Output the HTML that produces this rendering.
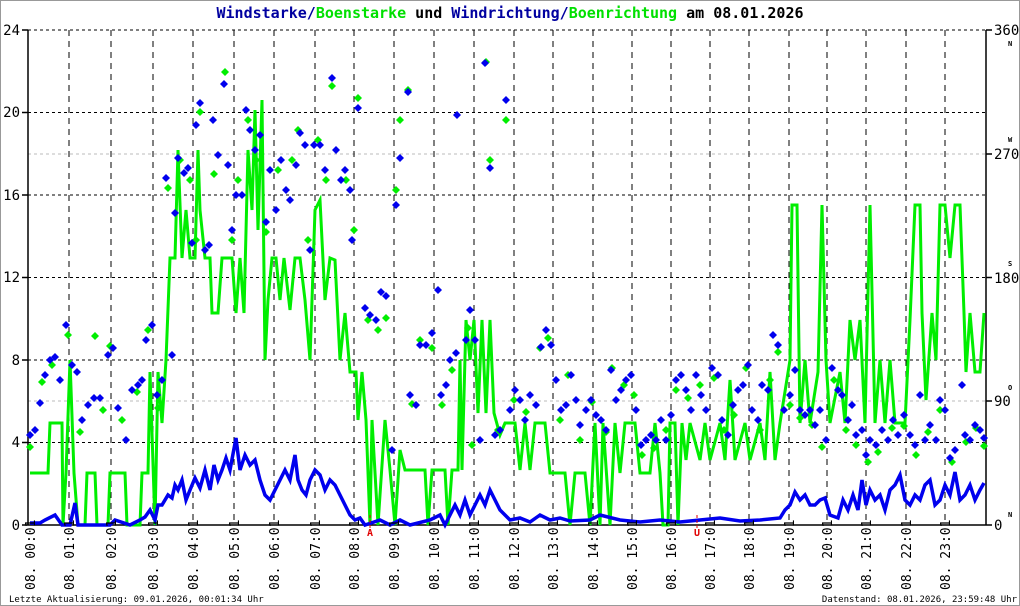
<!DOCTYPE html>
<html><head><meta charset="utf-8"><style>
html,body{margin:0;padding:0;background:#fff}
svg{display:block}
text{font-family:"DejaVu Sans Mono","Liberation Mono",monospace}
</style></head><body>
<svg width="1020" height="606" viewBox="0 0 1020 606" xmlns="http://www.w3.org/2000/svg">
<defs><path id="d" d="M0,-4 L4,0 L0,4 L-4,0Z"/></defs>
<rect x="0.5" y="0.5" width="1019" height="605" fill="#fff" stroke="#999"/>
<text x="510" y="18" text-anchor="middle" font-size="15" font-weight="bold" fill="#0000a0">Windstarke/<tspan fill="#00e000">Boenstarke</tspan><tspan fill="#000"> und </tspan>Windrichtung/<tspan fill="#00e000">Boenrichtung</tspan><tspan fill="#000"> am 08.01.2026</tspan></text>
<g stroke="#000" stroke-width="1" stroke-dasharray="3,3">
<path d="M28,30H986M28,112.5H986M28,195H986M28,277.5H986M28,360H986M28,442.5H986"/>
</g>
<g stroke="#bbb" stroke-width="1" stroke-dasharray="3,3"><path d="M28,154H986M28,401H986"/></g>
<g stroke="#000" stroke-width="1" stroke-dasharray="6,5">
<path d="M69,30V525M111,30V525M153,30V525M193,30V525M234,30V525M274,30V525M315,30V525M354,30V525M394,30V525M434,30V525M474,30V525M514,30V525M553,30V525M593,30V525M632,30V525M671,30V525M710,30V525M749,30V525M789,30V525M827,30V525M866,30V525M906,30V525M945,30V525"/>
</g>
<g stroke="#000" stroke-width="1.5" fill="none"><path d="M28,30V525H986V30M22,30H28M22,112.5H28M22,195H28M22,277.5H28M22,360H28M22,442.5H28M22,525H28M986,30H992M986,154H992M986,277.5H992M986,401H992M986,525H992"/></g>
<g font-size="14" fill="#000">
<text x="20" y="35" text-anchor="end">24</text><text x="20" y="117" text-anchor="end">20</text><text x="20" y="200" text-anchor="end">16</text><text x="20" y="282" text-anchor="end">12</text><text x="20" y="365" text-anchor="end">8</text><text x="20" y="447" text-anchor="end">4</text><text x="20" y="530" text-anchor="end">0</text>
<text x="994" y="35">360</text><text x="994" y="159">270</text><text x="994" y="283">180</text><text x="994" y="406">90</text><text x="994" y="530">0</text>
</g>
<g font-size="7" font-weight="bold" fill="#000"><text x="1008" y="46">N</text><text x="1008" y="142">W</text><text x="1008" y="266">S</text><text x="1008" y="390">O</text><text x="1008" y="517">N</text></g>
<polyline fill="none" stroke="#00ee00" stroke-width="3" points="30,473 48,473 50,423 62,423 63,525 66,473 70,360 74,473 78,525 85,525 87,473 95,473 97,525 108,525 110,473 125,473 127,525 140,525 142,473 148,473 150,372 155,525 158,372 162,423 166,360 170,258 175,258 178,150 182,258 186,210 190,258 195,258 198,150 200,210 205,258 210,258 212,313 218,313 222,258 228,258 232,258 236,313 240,258 244,313 248,150 252,210 255,110 258,230 262,100 265,360 268,300 272,258 276,258 280,300 284,258 290,310 295,258 300,258 305,300 310,360 315,210 320,200 325,300 330,258 335,260 340,360 345,313 350,372 356,372 358,420 362,372 366,420 370,525 372,420 378,525 385,420 390,470 395,525 400,450 405,470 410,470 425,470 428,525 432,470 440,470 445,470 448,525 452,470 458,470 460,360 462,470 466,320 470,360 474,320 478,413 482,320 486,413 490,320 494,413 500,435 505,423 515,423 520,470 525,423 530,470 535,423 545,423 550,473 560,473 565,473 570,525 575,473 585,473 590,525 595,423 600,525 603,423 610,525 615,423 620,473 625,423 635,423 640,473 650,473 655,423 660,473 663,525 668,525 670,423 675,423 678,525 682,423 686,460 690,423 700,460 705,423 710,460 720,423 725,460 730,380 735,460 745,423 750,460 760,423 765,460 770,372 775,460 780,423 790,360 792,205 797,205 800,423 805,360 810,423 818,372 822,205 826,360 830,423 840,372 845,423 850,320 855,360 860,320 865,423 870,205 875,423 880,360 885,423 890,360 895,423 905,423 910,320 915,205 920,205 922,313 926,400 932,313 936,360 940,205 945,205 950,258 955,205 960,205 964,313 966,372 970,313 975,372 980,372 984,313"/>
<polyline fill="none" stroke="#0000ee" stroke-width="3.5" points="30,523 40,523 45,520 55,515 62,525 70,525 75,503 78,525 110,525 115,520 130,525 140,520 145,517 150,510 155,520 158,505 162,505 168,495 172,498 175,485 178,490 182,480 186,500 190,490 195,478 200,488 205,470 210,490 214,465 218,480 222,470 226,458 230,470 236,438 240,470 245,455 250,465 255,460 260,480 265,495 270,500 275,490 280,480 285,470 290,480 295,455 298,480 302,490 306,495 310,480 315,470 320,475 325,490 330,480 335,485 340,495 345,505 350,515 355,520 360,518 365,525 380,520 390,525 400,520 410,525 430,520 440,515 445,525 455,505 460,515 465,500 470,515 475,505 480,495 485,505 490,490 495,500 500,510 505,515 510,520 520,518 530,522 540,515 550,520 560,518 570,521 590,520 600,515 620,520 640,522 660,520 680,522 700,520 720,518 740,521 760,520 780,518 785,510 790,505 795,492 800,500 805,495 810,505 815,505 820,500 825,498 830,515 838,518 843,500 848,510 853,495 858,510 862,480 866,505 870,490 875,500 880,495 885,510 890,490 895,485 900,475 905,500 910,505 915,495 920,500 925,485 930,480 935,505 940,500 945,485 950,495 955,472 960,500 965,495 970,485 975,500 980,490 984,483"/>
<g fill="#00ee00">
<use href="#d" x="30" y="447"/><use href="#d" x="42" y="382"/><use href="#d" x="52" y="365"/><use href="#d" x="68" y="335"/><use href="#d" x="80" y="432"/><use href="#d" x="95" y="336"/><use href="#d" x="103" y="410"/><use href="#d" x="110" y="346"/><use href="#d" x="122" y="420"/><use href="#d" x="137" y="392"/><use href="#d" x="148" y="330"/><use href="#d" x="158" y="408"/><use href="#d" x="168" y="188"/><use href="#d" x="180" y="160"/><use href="#d" x="190" y="180"/><use href="#d" x="196" y="240"/><use href="#d" x="200" y="112"/><use href="#d" x="214" y="174"/><use href="#d" x="225" y="72"/><use href="#d" x="232" y="240"/><use href="#d" x="238" y="180"/><use href="#d" x="248" y="120"/><use href="#d" x="256" y="160"/><use href="#d" x="266" y="232"/><use href="#d" x="278" y="170"/><use href="#d" x="292" y="160"/><use href="#d" x="298" y="130"/><use href="#d" x="308" y="240"/><use href="#d" x="318" y="140"/><use href="#d" x="326" y="180"/><use href="#d" x="332" y="86"/><use href="#d" x="346" y="180"/><use href="#d" x="354" y="230"/><use href="#d" x="358" y="98"/><use href="#d" x="368" y="320"/><use href="#d" x="378" y="330"/><use href="#d" x="386" y="318"/><use href="#d" x="396" y="190"/><use href="#d" x="400" y="120"/><use href="#d" x="408" y="90"/><use href="#d" x="412" y="404"/><use href="#d" x="420" y="340"/><use href="#d" x="432" y="348"/><use href="#d" x="442" y="405"/><use href="#d" x="452" y="370"/><use href="#d" x="468" y="328"/><use href="#d" x="472" y="445"/><use href="#d" x="486" y="62"/><use href="#d" x="490" y="160"/><use href="#d" x="498" y="430"/><use href="#d" x="506" y="120"/><use href="#d" x="514" y="400"/><use href="#d" x="526" y="412"/><use href="#d" x="540" y="348"/><use href="#d" x="548" y="338"/><use href="#d" x="560" y="420"/><use href="#d" x="568" y="375"/><use href="#d" x="580" y="440"/><use href="#d" x="592" y="402"/><use href="#d" x="606" y="432"/><use href="#d" x="612" y="368"/><use href="#d" x="624" y="385"/><use href="#d" x="634" y="395"/><use href="#d" x="642" y="455"/><use href="#d" x="654" y="448"/><use href="#d" x="666" y="430"/><use href="#d" x="676" y="390"/><use href="#d" x="688" y="398"/><use href="#d" x="700" y="385"/><use href="#d" x="714" y="378"/><use href="#d" x="724" y="430"/><use href="#d" x="734" y="415"/><use href="#d" x="746" y="368"/><use href="#d" x="760" y="430"/><use href="#d" x="770" y="380"/><use href="#d" x="778" y="352"/><use href="#d" x="790" y="405"/><use href="#d" x="800" y="418"/><use href="#d" x="812" y="425"/><use href="#d" x="822" y="447"/><use href="#d" x="834" y="380"/><use href="#d" x="846" y="430"/><use href="#d" x="856" y="445"/><use href="#d" x="868" y="462"/><use href="#d" x="878" y="452"/><use href="#d" x="892" y="428"/><use href="#d" x="904" y="426"/><use href="#d" x="916" y="455"/><use href="#d" x="928" y="432"/><use href="#d" x="940" y="410"/><use href="#d" x="952" y="462"/><use href="#d" x="966" y="442"/><use href="#d" x="976" y="428"/><use href="#d" x="984" y="446"/>
</g>
<g fill="#0000ee">
<use href="#d" x="30" y="435"/><use href="#d" x="35" y="430"/><use href="#d" x="40" y="403"/><use href="#d" x="45" y="375"/><use href="#d" x="50" y="360"/><use href="#d" x="55" y="357"/><use href="#d" x="60" y="380"/><use href="#d" x="66" y="325"/><use href="#d" x="72" y="365"/><use href="#d" x="77" y="372"/><use href="#d" x="82" y="420"/><use href="#d" x="88" y="405"/><use href="#d" x="94" y="398"/><use href="#d" x="100" y="398"/><use href="#d" x="108" y="355"/><use href="#d" x="113" y="348"/><use href="#d" x="118" y="408"/><use href="#d" x="126" y="440"/><use href="#d" x="132" y="390"/><use href="#d" x="138" y="385"/><use href="#d" x="142" y="380"/><use href="#d" x="146" y="340"/><use href="#d" x="152" y="325"/><use href="#d" x="157" y="395"/><use href="#d" x="162" y="380"/><use href="#d" x="166" y="178"/><use href="#d" x="172" y="355"/><use href="#d" x="175" y="213"/><use href="#d" x="178" y="158"/><use href="#d" x="184" y="173"/><use href="#d" x="188" y="168"/><use href="#d" x="192" y="243"/><use href="#d" x="196" y="125"/><use href="#d" x="200" y="103"/><use href="#d" x="205" y="250"/><use href="#d" x="209" y="245"/><use href="#d" x="213" y="120"/><use href="#d" x="218" y="155"/><use href="#d" x="224" y="84"/><use href="#d" x="228" y="165"/><use href="#d" x="232" y="230"/><use href="#d" x="236" y="195"/><use href="#d" x="242" y="195"/><use href="#d" x="246" y="110"/><use href="#d" x="250" y="130"/><use href="#d" x="255" y="150"/><use href="#d" x="260" y="135"/><use href="#d" x="266" y="222"/><use href="#d" x="270" y="170"/><use href="#d" x="276" y="210"/><use href="#d" x="281" y="160"/><use href="#d" x="286" y="190"/><use href="#d" x="290" y="200"/><use href="#d" x="296" y="165"/><use href="#d" x="300" y="133"/><use href="#d" x="305" y="145"/><use href="#d" x="310" y="250"/><use href="#d" x="314" y="145"/><use href="#d" x="320" y="145"/><use href="#d" x="325" y="170"/><use href="#d" x="332" y="78"/><use href="#d" x="336" y="150"/><use href="#d" x="341" y="180"/><use href="#d" x="345" y="170"/><use href="#d" x="350" y="190"/><use href="#d" x="352" y="240"/><use href="#d" x="358" y="108"/><use href="#d" x="365" y="308"/><use href="#d" x="370" y="315"/><use href="#d" x="376" y="320"/><use href="#d" x="381" y="292"/><use href="#d" x="386" y="296"/><use href="#d" x="392" y="450"/><use href="#d" x="396" y="205"/><use href="#d" x="400" y="158"/><use href="#d" x="408" y="92"/><use href="#d" x="410" y="395"/><use href="#d" x="416" y="405"/><use href="#d" x="420" y="345"/><use href="#d" x="426" y="345"/><use href="#d" x="432" y="333"/><use href="#d" x="438" y="290"/><use href="#d" x="441" y="395"/><use href="#d" x="446" y="385"/><use href="#d" x="450" y="360"/><use href="#d" x="456" y="353"/><use href="#d" x="457" y="115"/><use href="#d" x="466" y="340"/><use href="#d" x="470" y="310"/><use href="#d" x="475" y="340"/><use href="#d" x="480" y="440"/><use href="#d" x="485" y="63"/><use href="#d" x="490" y="168"/><use href="#d" x="495" y="435"/><use href="#d" x="500" y="430"/><use href="#d" x="506" y="100"/><use href="#d" x="510" y="410"/><use href="#d" x="515" y="390"/><use href="#d" x="520" y="400"/><use href="#d" x="525" y="420"/><use href="#d" x="530" y="395"/><use href="#d" x="536" y="405"/><use href="#d" x="541" y="347"/><use href="#d" x="546" y="330"/><use href="#d" x="551" y="345"/><use href="#d" x="556" y="380"/><use href="#d" x="561" y="410"/><use href="#d" x="566" y="405"/><use href="#d" x="571" y="375"/><use href="#d" x="576" y="400"/><use href="#d" x="580" y="425"/><use href="#d" x="586" y="410"/><use href="#d" x="591" y="400"/><use href="#d" x="596" y="415"/><use href="#d" x="601" y="420"/><use href="#d" x="606" y="430"/><use href="#d" x="611" y="370"/><use href="#d" x="616" y="400"/><use href="#d" x="621" y="390"/><use href="#d" x="626" y="380"/><use href="#d" x="631" y="375"/><use href="#d" x="636" y="410"/><use href="#d" x="641" y="445"/><use href="#d" x="646" y="440"/><use href="#d" x="651" y="435"/><use href="#d" x="656" y="440"/><use href="#d" x="661" y="420"/><use href="#d" x="666" y="440"/><use href="#d" x="671" y="415"/><use href="#d" x="676" y="380"/><use href="#d" x="681" y="375"/><use href="#d" x="686" y="390"/><use href="#d" x="691" y="410"/><use href="#d" x="696" y="375"/><use href="#d" x="701" y="395"/><use href="#d" x="706" y="410"/><use href="#d" x="712" y="368"/><use href="#d" x="718" y="375"/><use href="#d" x="722" y="420"/><use href="#d" x="728" y="435"/><use href="#d" x="733" y="405"/><use href="#d" x="738" y="390"/><use href="#d" x="743" y="385"/><use href="#d" x="748" y="365"/><use href="#d" x="752" y="410"/><use href="#d" x="758" y="420"/><use href="#d" x="762" y="385"/><use href="#d" x="768" y="390"/><use href="#d" x="773" y="335"/><use href="#d" x="778" y="345"/><use href="#d" x="784" y="410"/><use href="#d" x="790" y="395"/><use href="#d" x="795" y="370"/><use href="#d" x="800" y="410"/><use href="#d" x="805" y="415"/><use href="#d" x="810" y="410"/><use href="#d" x="815" y="425"/><use href="#d" x="820" y="410"/><use href="#d" x="826" y="440"/><use href="#d" x="832" y="368"/><use href="#d" x="838" y="390"/><use href="#d" x="842" y="395"/><use href="#d" x="848" y="420"/><use href="#d" x="852" y="405"/><use href="#d" x="856" y="435"/><use href="#d" x="862" y="430"/><use href="#d" x="866" y="455"/><use href="#d" x="870" y="440"/><use href="#d" x="876" y="445"/><use href="#d" x="882" y="430"/><use href="#d" x="888" y="440"/><use href="#d" x="893" y="420"/><use href="#d" x="898" y="435"/><use href="#d" x="904" y="415"/><use href="#d" x="910" y="435"/><use href="#d" x="915" y="445"/><use href="#d" x="920" y="395"/><use href="#d" x="925" y="440"/><use href="#d" x="930" y="425"/><use href="#d" x="936" y="440"/><use href="#d" x="940" y="400"/><use href="#d" x="945" y="410"/><use href="#d" x="950" y="458"/><use href="#d" x="955" y="450"/><use href="#d" x="962" y="385"/><use href="#d" x="965" y="435"/><use href="#d" x="970" y="440"/><use href="#d" x="975" y="425"/><use href="#d" x="980" y="430"/><use href="#d" x="984" y="438"/>
</g>
<g stroke="#e00000" stroke-dasharray="3,2"><path d="M370,515V528M697,515V528"/></g>
<g font-size="10" font-weight="bold" fill="#e00000"><text x="367" y="536">A</text><text x="694" y="536">U</text></g>
<g font-size="13" fill="#000">
<text transform="translate(35,590) rotate(-90)">08. 00:01</text>
<text transform="translate(74,590) rotate(-90)">08. 01:01</text>
<text transform="translate(116,590) rotate(-90)">08. 02:01</text>
<text transform="translate(158,590) rotate(-90)">08. 03:01</text>
<text transform="translate(198,590) rotate(-90)">08. 04:01</text>
<text transform="translate(239,590) rotate(-90)">08. 05:01</text>
<text transform="translate(279,590) rotate(-90)">08. 06:01</text>
<text transform="translate(320,590) rotate(-90)">08. 07:01</text>
<text transform="translate(359,590) rotate(-90)">08. 08:01</text>
<text transform="translate(399,590) rotate(-90)">08. 09:01</text>
<text transform="translate(439,590) rotate(-90)">08. 10:01</text>
<text transform="translate(479,590) rotate(-90)">08. 11:01</text>
<text transform="translate(519,590) rotate(-90)">08. 12:01</text>
<text transform="translate(558,590) rotate(-90)">08. 13:01</text>
<text transform="translate(598,590) rotate(-90)">08. 14:01</text>
<text transform="translate(637,590) rotate(-90)">08. 15:01</text>
<text transform="translate(676,590) rotate(-90)">08. 16:01</text>
<text transform="translate(715,590) rotate(-90)">08. 17:01</text>
<text transform="translate(754,590) rotate(-90)">08. 18:01</text>
<text transform="translate(794,590) rotate(-90)">08. 19:01</text>
<text transform="translate(832,590) rotate(-90)">08. 20:01</text>
<text transform="translate(871,590) rotate(-90)">08. 21:01</text>
<text transform="translate(911,590) rotate(-90)">08. 22:01</text>
<text transform="translate(950,590) rotate(-90)">08. 23:01</text>
</g>
<g font-size="9" fill="#000"><text x="9" y="602">Letzte Aktualisierung: 09.01.2026, 00:01:34 Uhr</text><text x="1017" y="602" text-anchor="end">Datenstand: 08.01.2026, 23:59:48 Uhr</text></g>
</svg>
</body></html>
